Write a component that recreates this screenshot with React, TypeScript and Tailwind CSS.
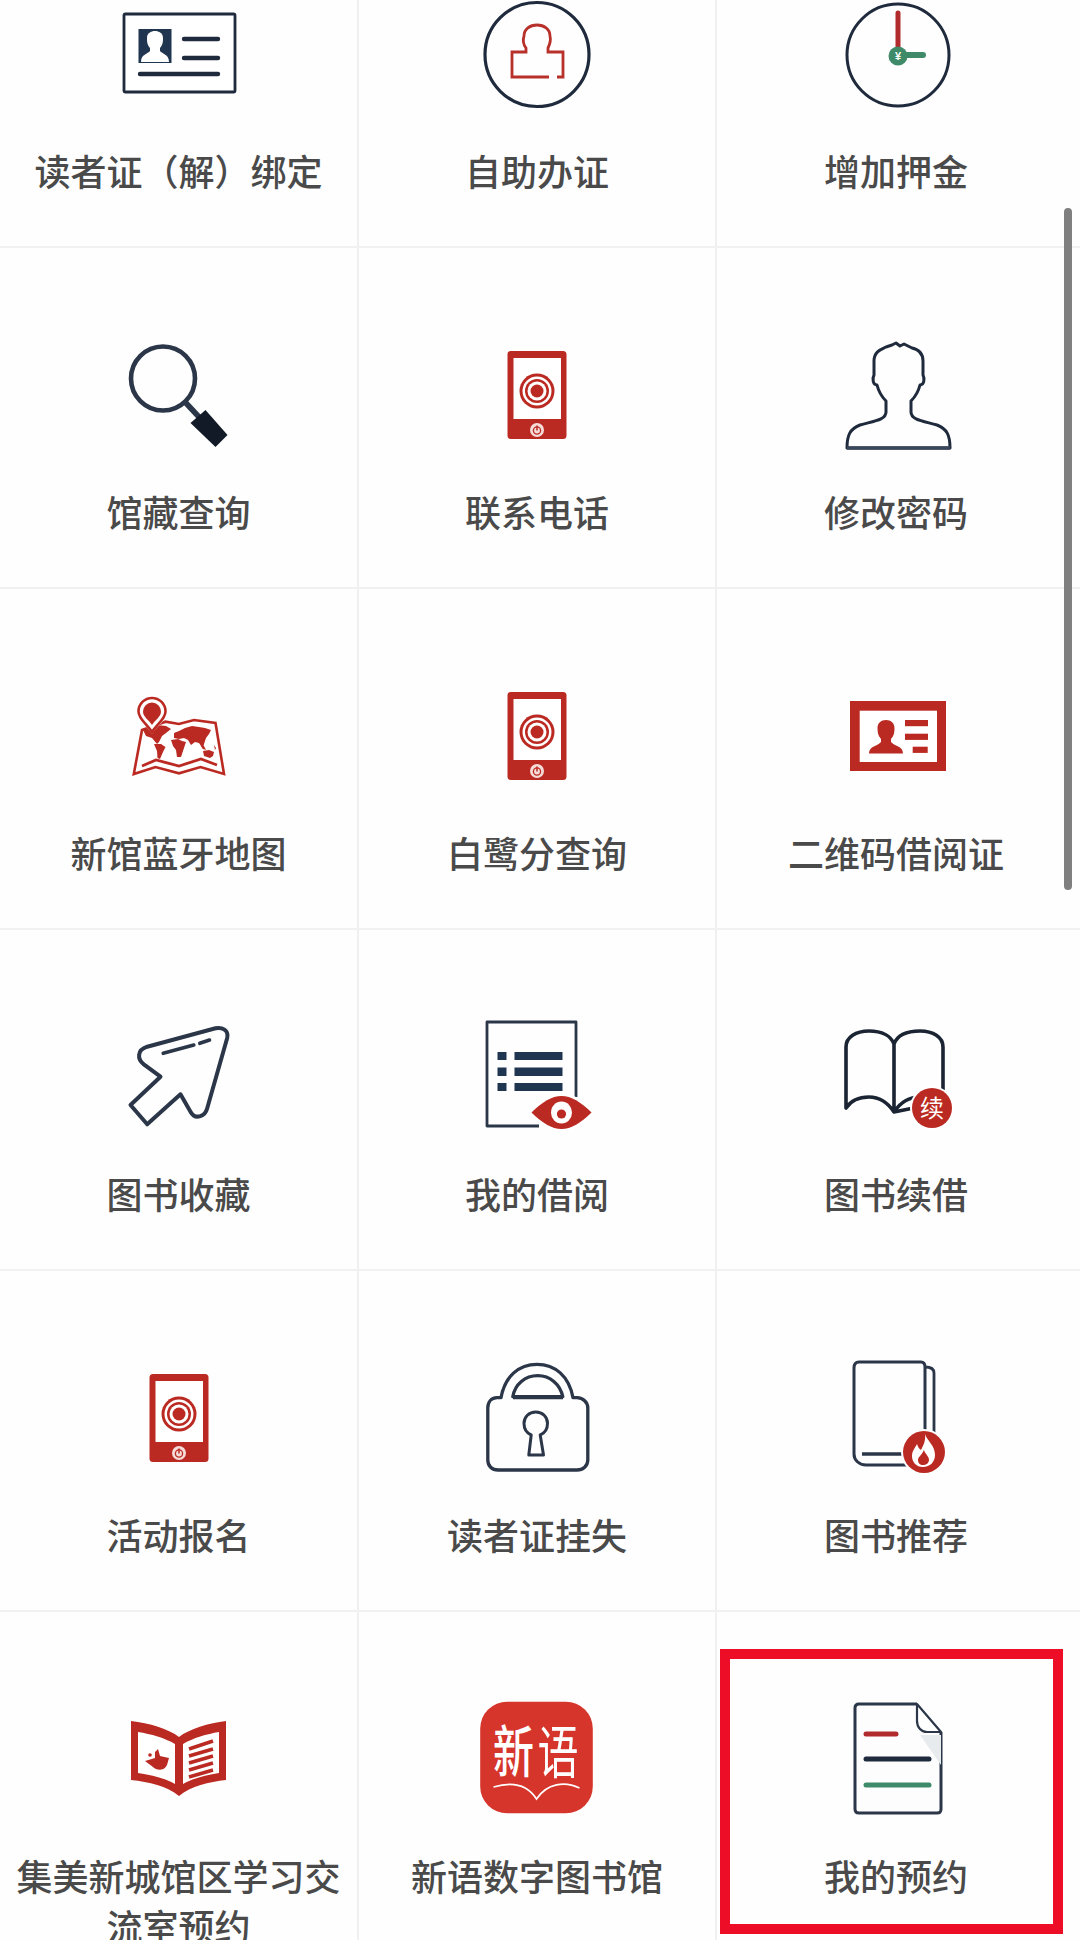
import React from "react";

const NAVY = "#1f2b3d";
const RED = "#bb2a22";
const GREEN = "#3f8a68";

function Svg({ children }: { children: React.ReactNode }) {
  return (
    <svg viewBox="0 0 120 120" width={120} height={120} className="block overflow-visible" fill="none">
      {children}
    </svg>
  );
}

function IdCardOutline() {
  return (
    <Svg>
      <rect x="5" y="20" width="111" height="78" rx="1.5" stroke={NAVY} strokeWidth="2.8" fill="#fff" />
      <rect x="19.5" y="35" width="33" height="34" fill="#1f3550" />
      <path d="M22 68 C22 60 29 60 31 57 V54 C28 51 28 47 28 44 C28 39 32 37 36 37 C40 37 44 39 44 44 C44 47 44 51 41 54 V57 C43 60 50 60 50 68 Z" fill="#fff" />
      <g stroke={NAVY} strokeWidth="4.4" strokeLinecap="round">
        <path d="M65 45 H99" />
        <path d="M65 64 H99" />
        <path d="M21 80 H99" />
      </g>
    </Svg>
  );
}

function StampCircle() {
  return (
    <Svg>
      <circle cx="60" cy="60.5" r="52" stroke={NAVY} strokeWidth="3.2" />
      <path
        d="M72 83 H35 V58 H49 V54 C46 50 46 45 47 42 C47 35 53 31 60 31 C67 31 73 35 73 42 C74 46 73 50 71 54 V58 H86 V83 H80"
        stroke="#b8302a"
        strokeWidth="2.8"
      />
    </Svg>
  );
}

function ClockYen() {
  return (
    <Svg>
      <circle cx="62" cy="61" r="51" stroke={NAVY} strokeWidth="3" />
      <path d="M62 19 V60" stroke="#b12a2c" strokeWidth="5" strokeLinecap="round" />
      <path d="M64 61 H87" stroke={GREEN} strokeWidth="6" strokeLinecap="round" />
      <circle cx="62" cy="62" r="9.5" fill={GREEN} />
      <text x="62" y="66" textAnchor="middle" fontSize="11" fontWeight="700" fill="#fff" fontFamily="Liberation Sans, sans-serif">¥</text>
    </Svg>
  );
}

function Magnifier() {
  return (
    <Svg>
      <circle cx="44" cy="43.5" r="32" stroke="#2b3648" strokeWidth="4.6" />
      <path d="M66 67 L80 82" stroke="#2b3648" strokeWidth="5.5" />
      <path d="M86.5 75 L108.5 100 L96.5 112 L71.5 88 Z" fill="#111a26" />
    </Svg>
  );
}

function Phone() {
  return (
    <Svg>
      <rect x="30.5" y="16" width="59" height="88" rx="3.5" fill={RED} />
      <rect x="36.5" y="23" width="47.5" height="61" fill="#fff" />
      <circle cx="60" cy="56" r="17.5" fill={RED} />
      <circle cx="60" cy="56" r="14.5" fill="#fff" />
      <circle cx="60" cy="56" r="12" fill={RED} />
      <circle cx="60" cy="56" r="9.5" fill="#fff" />
      <circle cx="60" cy="56" r="6.5" fill={RED} />
      <circle cx="60" cy="95" r="7" fill="#f5dcd9" />
      <circle cx="60" cy="95.5" r="3.6" stroke={RED} strokeWidth="1.3" />
      <path d="M60 90.5 V95.5" stroke={RED} strokeWidth="1.5" />
    </Svg>
  );
}

function PersonOutline() {
  return (
    <Svg>
      <path
        d="M11 113 C11 100 14 94 24 90 C38 86 50 85 50 77 V66 C44 60 42 54 41 50 C37 50 36 44 38 40 V26 C38 16 46 14 50 12 L56 10 L60 8 L64 11 L68 9 L76 13 C85 15 87 20 87 26 V40 C89 44 88 50 84 50 C83 54 81 60 75 66 V77 C75 85 87 86 101 90 C111 94 114 100 114 113 Z"
        stroke={NAVY}
        strokeWidth="3"
        strokeLinejoin="round"
      />
      <path d="M11 113 H114" stroke="#3a465a" strokeWidth="3.6" />
    </Svg>
  );
}

function WorldMap() {
  return (
    <Svg>
      <path d="M23 54 L46.5 45.7 L60 48 L75 44 L96.5 47 L105 98 L81.5 91 L60 97.3 L36.5 91 L14.8 98 Z" stroke={RED} strokeWidth="2.6" strokeLinejoin="miter" fill="#fff" />
      <path d="M23 90 L37 84 L60 90 L82 83 L98 89" stroke={RED} strokeWidth="2.8" />
      <g fill={RED}>
        <path d="M24 54 L38 49 L47 50 L52 53 L47 57 L43 60 L40 66 L38 68 L33 62 L27 60 Z" />
        <path d="M35 68 L42 68 L46.5 71 L44 76 L41 83 L38.5 82 L38 75 Z" />
        <path d="M55 57 L60 55 L66 52 L73 50 L80 51 L86 52 L92 54 L90 58 L87 62 L85 68 L84 73 L80 67 L76 66 L72 69 L69 64 L65 62 L60 63 L55 62 Z" />
        <path d="M52 64 L59 63 L63 65 L67 66 L65 72 L62 81 L58 81 L57 74 L54 70 Z" />
        <path d="M84 75 L90 74 L95 76 L94 80 L91 82 L85 80 Z" />
        <path d="M95 69 L97 72 L96 74 Z" />
        <path d="M82 70 L85 70 L87 74 L84 73 Z" />
      </g>
      <path d="M33 58 C28 50 18 44 18 36 A15 15 0 0 1 48 36 C48 44 38 50 33 58 Z" fill="#fff" />
      <path d="M33 56 C28 48 19.5 43 19.5 35.5 A13.5 13.5 0 0 1 46.5 35.5 C46.5 43 38 48 33 56 Z" stroke={RED} strokeWidth="2.6" fill="#fff" />
      <path d="M33 49 C30 44 24 41 24 35.5 A9 9 0 0 1 42 35.5 C42 41 36 44 33 49 Z" fill={RED} />
    </Svg>
  );
}

function IdCardRed() {
  return (
    <Svg>
      <rect x="14" y="25" width="96" height="70" fill={RED} />
      <rect x="23.7" y="34.7" width="77.3" height="51.3" fill="#fff" />
      <path d="M33 77.5 C33 70 42 70 45 66 V63 C42 60 41.5 56 41.5 52 C41.5 47 45 44 50 44 C55 44 58.5 47 58.5 52 C58.5 56 58 60 55 63 V66 C58 70 67 70 67 77.5 Z" fill={RED} />
      <rect x="69" y="44" width="23" height="6.2" fill={RED} />
      <rect x="69" y="57.7" width="23" height="6.2" fill={RED} />
      <rect x="76.7" y="70.7" width="15" height="6.2" fill={RED} />
    </Svg>
  );
}

function ArrowOutline() {
  return (
    <Svg>
      <path
        d="M28.2 29.7 L96.5 11.3 C103 10 110 13 108.2 21 L88.2 91.3 C86 100 76 103 71.5 94.7 L61.5 77.3 L28.2 107.3 L11.5 88 L41.5 59.7 L24.8 47.3 C18 42 18 33 28.2 29.7 Z"
        stroke="#2b3648"
        strokeWidth="4"
        strokeLinejoin="round"
        strokeLinecap="round"
      />
      <path d="M44.2 36.3 L74.8 28" stroke="#2b3648" strokeWidth="3.6" strokeLinecap="round" />
      <path d="M80.8 26.3 L90.5 23" stroke="#2b3648" strokeWidth="3.6" strokeLinecap="round" />
    </Svg>
  );
}

function ListEye() {
  return (
    <Svg>
      <path d="M62 109 H10 V5 H99 V80" stroke="#2b3648" strokeWidth="2.8" strokeLinejoin="round" />
      <g fill="#1f3550">
        <rect x="20.5" y="35" width="9" height="8" />
        <rect x="37.5" y="35" width="48" height="8" />
        <rect x="20.5" y="50.5" width="9" height="8.5" />
        <rect x="37.5" y="50.5" width="48" height="8.5" />
        <rect x="20.5" y="66" width="9" height="8" />
        <rect x="37.5" y="66" width="48" height="8" />
      </g>
      <path d="M51 95.5 C63 83 74 76 84.5 76 C95 76 106 83 118 95.5 C106 108 95 115 84.5 115 C74 115 63 108 51 95.5 Z" fill="#fff" />
      <path d="M54.5 95.5 C65 85 75 79 84.5 79 C94 79 104 85 114.5 95.5 C104 106 94 112 84.5 112 C75 112 65 106 54.5 95.5 Z" fill={RED} />
      <ellipse cx="84.5" cy="95.5" rx="10.5" ry="11" fill="#fff" />
      <circle cx="84.5" cy="97" r="4.6" fill={RED} />
    </Svg>
  );
}

function BookRenew() {
  return (
    <Svg>
      <path
        d="M58 95 C52 86 44 80 33 80 C22 80 14 85 10 91 V30 C10 20 20 14 33 14 C46 14 55 19 58 27 C61 19 70 14 84 14 C97 14 107 20 107 30 V80 M107 85 C101 82 93 80 84 80 C72 80 64 86 58 95 Z M58 27 V95"
        stroke="#1b2433"
        strokeWidth="3.6"
        strokeLinejoin="round"
      />
      <circle cx="96" cy="91" r="22" fill="#fff" />
      <circle cx="96" cy="91" r="20" fill={RED} />
      <text x="96" y="100" textAnchor="middle" fontSize="24" fill="#fff" fontFamily="'Noto Sans CJK SC', sans-serif">续</text>
    </Svg>
  );
}

function Padlock() {
  return (
    <Svg>
      <path
        d="M24 39.7 H20 C14 40 10.8 44 10.8 50 V102 C10.8 108 15 112 21 112 H100 C106 112 110.8 108 110.8 102 V50 C110.8 44 106 40 100 39.7 H96 C92 18 78 6.3 60 6.3 C42 6.3 28 18 24 39.7 Z"
        stroke="#2b3648"
        strokeWidth="3.3"
        strokeLinejoin="round"
      />
      <path d="M35.8 38.7 C38 26 48 17.7 60.8 17.7 C73 17.7 83 26 85.8 38.7 Z" stroke="#2b3648" strokeWidth="3.3" strokeLinejoin="round" fill="#fff" />
      <path d="M36 39.5 H86" stroke="#2b3648" strokeWidth="3.6" />
      <path d="M54.2 77 C49.5 75 47 70.5 47 65.3 C47 59 52 54 58.8 54 C65.5 54 70.5 59 70.5 65.3 C70.5 70.5 68 75 63.2 77 L66.5 97 H51.8 Z" stroke="#2b3648" strokeWidth="3" strokeLinejoin="round" />
    </Svg>
  );
}

function BookFire() {
  return (
    <Svg>
      <path d="M72 107 H30 C23 107 18 102 18 96 V10 C18 6 20 4 23 4 H85 C88 4 89 6 89 9 V80" stroke="#2b3648" strokeWidth="3" />
      <path d="M89 9 C95 9 98 11 98 15 V76" stroke="#2b3648" strokeWidth="2.8" />
      <path d="M26 96 H67" stroke="#2b3648" strokeWidth="3.6" />
      <circle cx="88" cy="94" r="23" fill="#fff" />
      <circle cx="88" cy="94" r="21" fill={RED} />
      <path d="M89 76 C91 83 99 87 99 97 C99 104 94 109 87 109 C80 109 76 104 76 98 C76 93 79 90 81 86 C82 89 83 91 85 92 C87 88 90 83 89 76 Z" fill="#fff" />
      <path d="M88 92 C89 96 93 98 93 102 C93 105 90 107 87 107 C84 107 82 105 82 102 C82 99 85 98 88 92 Z" fill={RED} />
    </Svg>
  );
}

function OpenBook() {
  return (
    <Svg>
      <path d="M12 22 C30 24 50 30 60 38 C70 30 90 24 107 22 V81 C90 83 72 87 60 97 C48 87 30 83 12 81 Z" fill={RED} />
      <path d="M19 33 C32 35 46 39 56 45 V85 C46 79 32 76 19 74 Z" fill="#fff" />
      <path d="M64 45 C74 39 88 35 100 33 V74 C88 76 74 79 64 85 Z" fill="#fff" />
      <g stroke={RED} strokeWidth="3.6">
        <path d="M70 50 L94 42" />
        <path d="M70 57 L94 50" />
        <path d="M70 64 L94 57" />
        <path d="M70 71 L94 64" />
        <path d="M70 78 L94 71" />
      </g>
      <path d="M26 62 L36 59 L36 53 L39 50 L41 57 L50 59 L48 66 C45 72 38 72 34 68 Z" fill={RED} />
      <circle cx="31" cy="56" r="1.8" fill={RED} />
    </Svg>
  );
}

function AppXinyu() {
  return (
    <Svg>
      <rect x="3.2" y="2.7" width="112.6" height="111.6" rx="27" fill="#d6352b" />
      <text
        textAnchor="middle"
        fontSize="41"
        fontWeight="500"
        fill="#fff"
        transform="translate(36.5 73) scale(1 1.35)"
        fontFamily="'Noto Sans CJK SC', sans-serif"
      >
        新
      </text>
      <text
        textAnchor="middle"
        fontSize="41"
        fontWeight="400"
        fill="#fff"
        transform="translate(81 74) scale(1 1.38)"
        fontFamily="'Noto Sans CJK SC', sans-serif"
      >
        语
      </text>
      <path d="M16.5 88 C30 84 48 82 59.5 100 C70 84 88 82 102.5 89" stroke="#fff" strokeWidth="1.6" />
    </Svg>
  );
}

function DocLines() {
  return (
    <Svg>
      <path d="M81 5 H23 C20 5 19 7 19 9 V110 C19 113 21 114 23 114 H101 C104 114 105 113 105 110 V33" stroke="#2b3648" strokeWidth="3" fill="#fdfdfd" />
      <path d="M84 36 L105 36 V66 Z" fill="#e8ebee" />
      <path d="M81 5 L105 33 L91 33 C85 33 81 28 81 22 Z" fill="#fff" stroke="#2b3648" strokeWidth="2.2" strokeLinejoin="round" />
      <path d="M30 35 H60" stroke="#b12a2c" strokeWidth="5" strokeLinecap="round" />
      <path d="M30 60 H93" stroke="#1f2b3d" strokeWidth="5" strokeLinecap="round" />
      <path d="M30 86 H93" stroke={GREEN} strokeWidth="5" strokeLinecap="round" />
    </Svg>
  );
}

const rows: { label: string; Icon: () => React.ReactElement }[][] = [
  [
    { label: "读者证（解）绑定", Icon: IdCardOutline },
    { label: "自助办证", Icon: StampCircle },
    { label: "增加押金", Icon: ClockYen },
  ],
  [
    { label: "馆藏查询", Icon: Magnifier },
    { label: "联系电话", Icon: Phone },
    { label: "修改密码", Icon: PersonOutline },
  ],
  [
    { label: "新馆蓝牙地图", Icon: WorldMap },
    { label: "白鹭分查询", Icon: Phone },
    { label: "二维码借阅证", Icon: IdCardRed },
  ],
  [
    { label: "图书收藏", Icon: ArrowOutline },
    { label: "我的借阅", Icon: ListEye },
    { label: "图书续借", Icon: BookRenew },
  ],
  [
    { label: "活动报名", Icon: Phone },
    { label: "读者证挂失", Icon: Padlock },
    { label: "图书推荐", Icon: BookFire },
  ],
  [
    { label: "集美新城馆区学习交流室预约", Icon: OpenBook },
    { label: "新语数字图书馆", Icon: AppXinyu },
    { label: "我的预约", Icon: DocLines },
  ],
];

export default function App() {
  return (
    <div className="relative h-[1940px] w-[1080px] overflow-hidden bg-[#fefefe] font-['Noto_Sans_CJK_SC','Noto_Sans',sans-serif]">
      <div className="-mt-[93px]">
        {rows.map((row, i) => (
          <div key={i} className="grid h-[341px] grid-cols-[359px_358px_358px] overflow-hidden border-b-2 border-[#f1f1f1]">
            {row.map((cell, j) => (
              <div
                key={j}
                className={
                  j < 2
                    ? "flex flex-col items-center border-r-2 border-[#f0f0f0] px-[10px] pt-[87px]"
                    : "flex flex-col items-center px-[10px] pt-[87px]"
                }
              >
                <cell.Icon />
                <div className="mt-[31px] text-center text-[36px] font-medium leading-[50px] text-[#4a4a4a]">{cell.label}</div>
              </div>
            ))}
          </div>
        ))}
      </div>
      <div className="absolute left-[1064px] top-[208px] h-[682px] w-[8px] rounded-full bg-[#7f7f7f]" />
      <div className="absolute left-[720px] top-[1649px] h-[285px] w-[343px] border-[10px] border-[#ee0d26]" />
    </div>
  );
}
